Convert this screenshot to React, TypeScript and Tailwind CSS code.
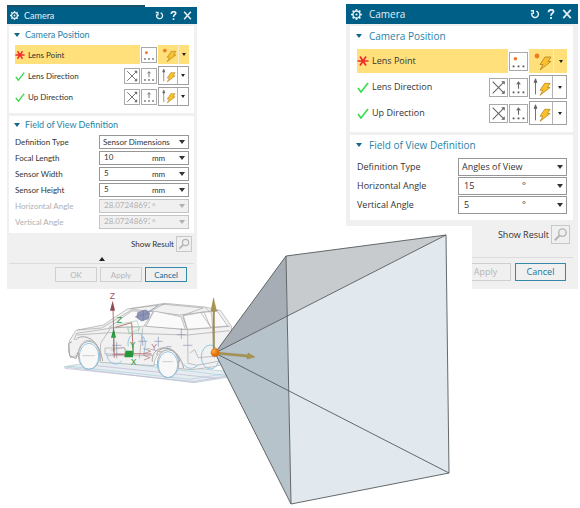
import { useId, type ReactNode } from "react";

type Size = "sm" | "lg";

const theme = {
  sm: {
    dialog: "w-[190px] font-['Lato','Noto_Sans',sans-serif]",
    header: "h-[17px] text-[9px] pl-[3px] pr-[5px] gap-[5px]",
    gear: "size-[9px]",
    tools: "gap-[5px]",
    tool: "size-[9px]",
    body: "pt-[2px] pl-[2px] pr-[3px]",
    positionPanel: "h-[87px]",
    fieldPanel: "h-[117px] mt-[3px]",
    heading: "h-[17px] text-[9px] pl-[5px] gap-[5px]",
    rows: "gap-[2px] pl-[6px] pr-[5px] mt-[2px]",
    row: "h-[19px] text-[8px]",
    mark: "size-[10px] mr-[3px]",
    square: "size-[16px]",
    split: "w-[31px] h-[19px]",
    splitArrow: "w-[11px]",
    fields: "mt-[2px] pl-[6px] pr-[5px] gap-[2px]",
    field: "h-[14px] text-[8px]",
    control: "w-[90px]",
    value: "w-[50px] pl-[4px]",
    select: "pl-[3px]",
    result: "h-[22px] pr-[2px] text-[8px]",
    footer: "h-[26px] text-[8px] gap-[3px] pr-[7px] pb-[4px]",
    button: "w-[42px] h-[15px]",
  },
  lg: {
    dialog: "w-[232px] font-['Open_Sans','Noto_Sans',sans-serif]",
    header: "h-[20px] text-[10px] pl-[5px] pr-[6px] gap-[7px]",
    gear: "size-[11px]",
    tools: "gap-[6px]",
    tool: "size-[10px]",
    body: "pt-[2px] pl-[4px] pr-[5px]",
    positionPanel: "h-[106px]",
    fieldPanel: "h-[85px] mt-[3px]",
    heading: "h-[20px] text-[10px] pl-[6px] gap-[7px]",
    rows: "gap-[2px] pl-[7px] pr-[6px] mt-[3px]",
    row: "h-[24px] text-[9px]",
    mark: "size-[12px] mr-[3px]",
    square: "size-[19px]",
    split: "w-[38px] h-[24px]",
    splitArrow: "w-[14px]",
    fields: "mt-[3px] pl-[7px] pr-[6px] gap-[1px]",
    field: "h-[18px] text-[9px]",
    control: "w-[109px]",
    value: "w-[61px] pl-[5px]",
    select: "pl-[3px]",
    result: "h-[29px] pr-[3px] text-[9px]",
    footer: "h-[32px] text-[9px] gap-[4px] pr-[7px] pb-[3px]",
    button: "w-[51px] h-[18px]",
  },
};

function Triangle({ up = false, className = "" }: { up?: boolean; className?: string }) {
  return (
    <svg viewBox="0 0 6 4" className={`h-[4px] w-[6px] shrink-0 ${className}`} aria-hidden="true">
      <path d={up ? "M0 4h6L3 0z" : "M0 0h6L3 4z"} fill="currentColor" />
    </svg>
  );
}

function Gear({ className }: { className: string }) {
  return (
    <svg viewBox="0 0 20 20" className={className} aria-hidden="true" fill="none" stroke="currentColor">
      <circle cx="10" cy="10" r="6.5" strokeWidth="2.6" />
      <circle cx="10" cy="10" r="2" fill="currentColor" stroke="none" />
      <path d="M10 0v4M10 16v4M0 10h4M16 10h4M3 3l3 3M14 14l3 3M17 3l-3 3M6 14l-3 3" strokeWidth="3" />
    </svg>
  );
}

function DotsIcon({ point = false }: { point?: boolean }) {
  return (
    <svg viewBox="0 0 19 19" className="size-full" aria-hidden="true">
      {point ? (
        <circle cx="6" cy="6.5" r="2" fill="#ee7530" />
      ) : (
        <path d="M9.500 11V4M7.500 6l2-2.500 2 2.500" fill="none" stroke="#666" strokeWidth="1.200" />
      )}
      <path d="M3 14h2v2H3zM8.500 14h2v2h-2zM14 14h2v2h-2z" fill="#555" />
    </svg>
  );
}

function ReverseIcon() {
  return (
    <svg viewBox="0 0 19 19" className="size-full" aria-hidden="true" fill="none" stroke="#666" strokeWidth="1.200">
      <path d="M3 3l13 13M3 16L16 3" />
      <path d="M12.500 2.500h4v4zM16.500 12.500v4h-4z" fill="#666" stroke="none" />
    </svg>
  );
}

function BoltIcon({ point = false }: { point?: boolean }) {
  return (
    <svg viewBox="0 0 24 24" className="h-full min-w-0 flex-1" aria-hidden="true">
      {point ? (
        <circle cx="8" cy="7" r="2.400" fill="#ee7a25" />
      ) : (
        <path d="M6 20V5M4.500 7l1.500-4 1.500 4z" fill="#666" stroke="#666" strokeWidth="1" />
      )}
      <path d="M16 8h6l-3 4.500h3L11 21l3-5.500h-3z" fill="#fbc12d" stroke="#b98a25" strokeWidth="0.900" />
    </svg>
  );
}

function Mark({ required, className }: { required: boolean; className: string }) {
  return (
    <svg viewBox="0 0 12 12" className={`shrink-0 ${className}`} aria-hidden="true" fill="none">
      {required ? (
        <path d="M0.500 6h11M3 1.500l6 9M9 1.500l-6 9" stroke="#f12b2d" strokeWidth="1.700" />
      ) : (
        <path d="M1 7l3 4 7-9" stroke="#3edc50" strokeWidth="1.700" />
      )}
    </svg>
  );
}

function PickRow({ size, label, required = false }: { size: Size; label: string; required?: boolean }) {
  const t = theme[size];
  return (
    <div className={`flex items-center ${t.row}`}>
      <div className={`flex h-full min-w-0 flex-1 items-center ${required ? "bg-[#ffe07a]" : ""}`}>
        <Mark required={required} className={t.mark} />
        <span className="whitespace-nowrap">{label}</span>
      </div>
      {!required && (
        <button type="button" aria-label={`Reverse ${label}`} className={`border border-[#a9a9a9] bg-white ${t.square}`}>
          <ReverseIcon />
        </button>
      )}
      <button type="button" aria-label={`${label} dialog`} className={`mx-px border border-[#a9a9a9] bg-white ${t.square}`}>
        <DotsIcon point={required} />
      </button>
      <button
        type="button"
        aria-label={`${label} options`}
        className={`flex items-center ${t.split} ${required ? "bg-[#ffe07a]" : "border border-[#a0a0a0] bg-white"}`}
      >
        <BoltIcon point={required} />
        <span
          className={`flex h-full items-center justify-center border-l ${t.splitArrow} ${
            required ? "border-[#f3edd0]" : "border-[#b4b4b4]"
          }`}
        >
          <svg viewBox="0 0 4 3" className="h-[3px] w-[4px]" aria-hidden="true">
            <path d="M0 0h4L2 3z" fill="#222" />
          </svg>
        </span>
      </button>
    </div>
  );
}

function Field({ size, label, disabled = false, children }: {
  size: Size;
  label: string;
  disabled?: boolean;
  children: (id: string) => ReactNode;
}) {
  const t = theme[size];
  const id = useId();
  return (
    <div className={`flex items-center justify-between ${t.field} ${disabled ? "text-[#b0b0b0]" : ""}`}>
      <label htmlFor={id} className="whitespace-nowrap">{label}</label>
      <div
        className={`relative flex h-full items-center border ${t.control} ${
          disabled ? "border-[#c4c4c4] bg-[#f0f0f0]" : "border-[#969696] bg-white"
        }`}
      >
        {children(id)}
        <Triangle className="pointer-events-none absolute right-[3px]" />
      </div>
    </div>
  );
}

function TypeField({ size, value }: { size: Size; value: string }) {
  return (
    <Field size={size} label="Definition Type">
      {(id) => (
        <select id={id} defaultValue={value} className={`h-full w-full appearance-none outline-none ${theme[size].select}`}>
          <option>Sensor Dimensions</option>
          <option>Angles of View</option>
        </select>
      )}
    </Field>
  );
}

function NumberField({ size, label, value, unit, disabled = false }: {
  size: Size;
  label: string;
  value: string;
  unit: string;
  disabled?: boolean;
}) {
  return (
    <Field size={size} label={label} disabled={disabled}>
      {(id) => (
        <>
          <input id={id} defaultValue={value} disabled={disabled} className={`h-full pb-[2px] outline-none ${theme[size].value}`} />
          <span className="pl-[2px]">{unit}</span>
        </>
      )}
    </Field>
  );
}

function Heading({ size, children }: { size: Size; children: string }) {
  return (
    <h3 className={`flex items-center text-[#2882a6] ${theme[size].heading}`}>
      <Triangle className="text-[#14668b]" />
      <span className="whitespace-nowrap">{children}</span>
    </h3>
  );
}

function CameraDialog({ size, children }: { size: Size; children: ReactNode }) {
  const t = theme[size];
  return (
    <section className={`shrink-0 bg-[#f0f0f0] text-[#333] ${t.dialog}`}>
      <header className={`flex items-center bg-[#005f87] text-[#e5f0f5] ${t.header}`}>
        <Gear className={t.gear} />
        <h2 className="flex-1">Camera</h2>
        <div className={`flex ${t.tools}`}>
          <button type="button" aria-label="Reset">
            <svg viewBox="0 0 12 12" className={t.tool} fill="none" stroke="currentColor" strokeWidth="1.700">
              <path d="M7.500 2.500a4 4 0 1 1-5 2M1 2h3v4" />
            </svg>
          </button>
          <button type="button" aria-label="Help">
            <svg viewBox="0 0 12 12" className={t.tool} fill="none" stroke="currentColor" strokeWidth="2.200">
              <path d="M3 4c0-4 6-4 6-1 0 2-3 2-3 5M6 9.500V12" />
            </svg>
          </button>
          <button type="button" aria-label="Close">
            <svg viewBox="0 0 12 12" className={t.tool} fill="none" stroke="currentColor" strokeWidth="2">
              <path d="M1.500 1l9 10M10.500 1l-9 10" />
            </svg>
          </button>
        </div>
      </header>
      <div className={t.body}>
        <div className={`bg-white ${t.positionPanel}`}>
          <Heading size={size}>Camera Position</Heading>
          <div className={`flex flex-col ${t.rows}`}>
            <PickRow size={size} label="Lens Point" required />
            <PickRow size={size} label="Lens Direction" />
            <PickRow size={size} label="Up Direction" />
          </div>
        </div>
        <div className={`bg-white ${t.fieldPanel}`}>
          <Heading size={size}>Field of View Definition</Heading>
          <div className={`flex flex-col ${t.fields}`}>{children}</div>
        </div>
        <div className={`flex items-center justify-end gap-[2px] ${t.result}`}>
          <span>Show Result</span>
          <button type="button" aria-label="Show Result" className={`border border-[#c8c8c8] ${t.square}`}>
            <svg viewBox="0 0 18 18" className="size-full" fill="none" stroke="#b5b5b5" strokeWidth="1.500" aria-hidden="true">
              <circle cx="11" cy="7" r="4" />
              <path d="M8 10l-5 5" strokeWidth="2.200" />
            </svg>
          </button>
        </div>
        <div className="flex h-[8px] items-center justify-center">
          {size === "sm" && <Triangle up className="text-[#222]" />}
        </div>
        <footer className={`flex items-center justify-end border-t border-[#dcdcdc] ${t.footer}`}>
          <button type="button" disabled className={`border border-[#cfcfcf] text-[#b5b5b5] ${t.button}`}>OK</button>
          <button type="button" disabled className={`border border-[#cfcfcf] text-[#b5b5b5] ${t.button}`}>Apply</button>
          <button type="button" className={`border border-[#3787a8] font-medium text-[#17749b] ${t.button}`}>Cancel</button>
        </footer>
      </div>
    </section>
  );
}

function Car() {
  return (
    <g transform="translate(50 285) scale(0.3333)" fill="none" stroke="#a5a5a5" strokeWidth="2">
      <path d="M42 246L160 224 562 262 563 272 432 293z" fill="#e6edf0" stroke="#acc5c5" />
      <path d="M44 250L430 290 560 268M120 240L500 280" stroke="#c1b2d8" />
      <path d="M50 243L420 283 555 262M200 232L530 272" stroke="#a9cfdd" />
      <path
        d="M58 168L78 136 160 120 232 72 345 55 465 66 512 77 545 125 540 230 495 245 425 254 385 250C390 180 315 180 312 242L152 232C150 150 88 145 84 212L62 218 55 198z"
        fill="#f1f1f1"
      />
      <path d="M72 165L80 145 180 130 275 122 410 134 540 124M84 135L155 129 248 73 390 90 505 76M80 150L180 143 412 150 540 137" />
      <path d="M178 127L245 78 310 80 280 125zM288 124L312 78 393 95 406 133zM400 92L462 81 482 128 412 133zM452 82L502 79 533 123 483 127z" fill="#fafafa" />
      <path d="M240 71L345 58 460 69 398 91M345 55L300 80M465 68L485 84 493 218M398 94L413 137 414 232M278 130L268 220M180 132L152 175 150 224M420 204L434 194 445 218 540 210M412 234L440 241 510 228" />
      <path d="M66 170L56 176 59 212 78 221 83 202M77 165C88 147 145 147 158 228M307 230C302 178 380 165 401 249M320 210C325 180 380 180 390 232" strokeWidth="3" />
      <path d="M165 189h60v18h-60zM170 212h140M290 190l85 20M182 196l38-9 15 15" />
      <g fill="#f8f8f8" stroke="#aaa" strokeWidth="3">
        <ellipse cx="117" cy="211" rx="32" ry="42" />
        <ellipse cx="354" cy="236" rx="32" ry="42" />
      </g>
      <g stroke="#91c5e4" strokeWidth="3">
        <ellipse cx="117" cy="214" rx="29" ry="39" />
        <ellipse cx="354" cy="239" rx="29" ry="39" />
        <path d="M170 205a27 34 0 0 0 45 23M235 184a26 31 0 1 1 50 0l-4 29M400 236a28 32 0 0 0 45 2" />
        <ellipse cx="481" cy="216" rx="27" ry="36" />
      </g>
      <path d="M97 212h38M337 230h32" stroke="#b6b6b6" />
      <path d="M200 170v50M186 181h29M187 208h28M313 169h25M325 155v30M394 130v32M381 149h26M399 181h28M278 155v28M265 169h27M349 185h15" stroke="#8990b4" />
      <path d="M263 83l24-8 12 9-4 17-20 7-15-10zM255 96l40-11M280 75v32M290 84l35-23" stroke="#747da5" fill="#8e95b6" />
      <path d="M196 120l65-13 8 26-31 12-8-23M236 126h30v20h-30z" stroke="#a5ccb6" />
      <path d="M189 68L193 218M196 127L245 113 250 208M250 206L305 207M194 208h58" stroke="#bd7171" strokeWidth="3" />
      <path d="M188 47l-8 30h15z" fill="#904b50" stroke="none" />
      <path d="M280 190l22 9-22 7M282 211l18 7-18 7" stroke="#b07575" />
      <path d="M191 129l-8 29h15z" fill="#23983b" stroke="none" />
      <path d="M227 197h22v20h-26z" fill="#23983b" stroke="none" />
      <path d="M191 150v52M249 180v27" stroke="#55a663" strokeWidth="3" />
      <g stroke="none" fontFamily="Liberation Sans, sans-serif" fontSize="26">
        <text x="179" y="43" fill="#a5555c">Z</text>
        <text x="200" y="115" fill="#23983b">Z</text>
        <text x="239" y="190" fill="#23983b">Y</text>
        <text x="242" y="241" fill="#23983b">X</text>
        <text x="304" y="196" fill="#b78080">Y</text>
      </g>
    </g>
  );
}

function ViewFrustum() {
  return (
    <svg
      viewBox="0 226 472 282"
      className="pointer-events-none relative z-10 -mt-[63px] block h-[282px] w-[472px]"
      role="img"
      aria-label="Field of view projected from the rear of a car"
    >
      <defs>
        <radialGradient id="lens" cx="0.350" cy="0.350">
          <stop offset="0" stopColor="#ffad4b" />
          <stop offset="1" stopColor="#df6a00" />
        </radialGradient>
      </defs>
      <path d="M200 226h272v282H200z" fill="#fff" />
      <Car />
      <path d="M215 353L286 256 287 316z" fill="#a7adb4" />
      <path d="M215 353L287 316 291 504z" fill="#b7c3ca" />
      <path d="M286 256L446 235 287 316z" fill="#c8cbcd" />
      <path d="M287 316L446 235 449 473 291 504z" fill="#e1e9ef" />
      <g fill="none" stroke="#55595b" strokeWidth="0.900" strokeLinejoin="round">
        <path d="M286 256L446 235 449 473 291 504z" />
        <path d="M215 353L286 256M215 353L446 235M215 353L449 473M215 353L291 504" />
      </g>
      <g fill="#a8964f" stroke="#8b7a3c" strokeWidth="0.400">
        <path d="M213 353V311h-2l2.500-13 3 13h-2v42z" />
        <path d="M215 352l33 3v-2l7 4-8 2v-2l-32-3z" />
      </g>
      <circle cx="215" cy="352.500" r="4.300" fill="url(#lens)" />
    </svg>
  );
}

export default function App() {
  return (
    <main className="min-h-screen overflow-hidden bg-white">
      <div className="flex items-start justify-between pt-[4px] pr-[2px] pl-[7px]">
        <div className="pt-px">
          <div className="h-[2px] w-[138px] bg-[#16516b]" />
          <CameraDialog size="sm">
            <TypeField size="sm" value="Sensor Dimensions" />
            <NumberField size="sm" label="Focal Length" value="10" unit="mm" />
            <NumberField size="sm" label="Sensor Width" value="5" unit="mm" />
            <NumberField size="sm" label="Sensor Height" value="5" unit="mm" />
            <NumberField size="sm" label="Horizontal Angle" value="28.0724869358" unit="°" disabled />
            <NumberField size="sm" label="Vertical Angle" value="28.0724869358" unit="°" disabled />
          </CameraDialog>
        </div>
        <CameraDialog size="lg">
          <TypeField size="lg" value="Angles of View" />
          <NumberField size="lg" label="Horizontal Angle" value="15" unit="°" />
          <NumberField size="lg" label="Vertical Angle" value="5" unit="°" />
        </CameraDialog>
      </div>
      <ViewFrustum />
    </main>
  );
}
